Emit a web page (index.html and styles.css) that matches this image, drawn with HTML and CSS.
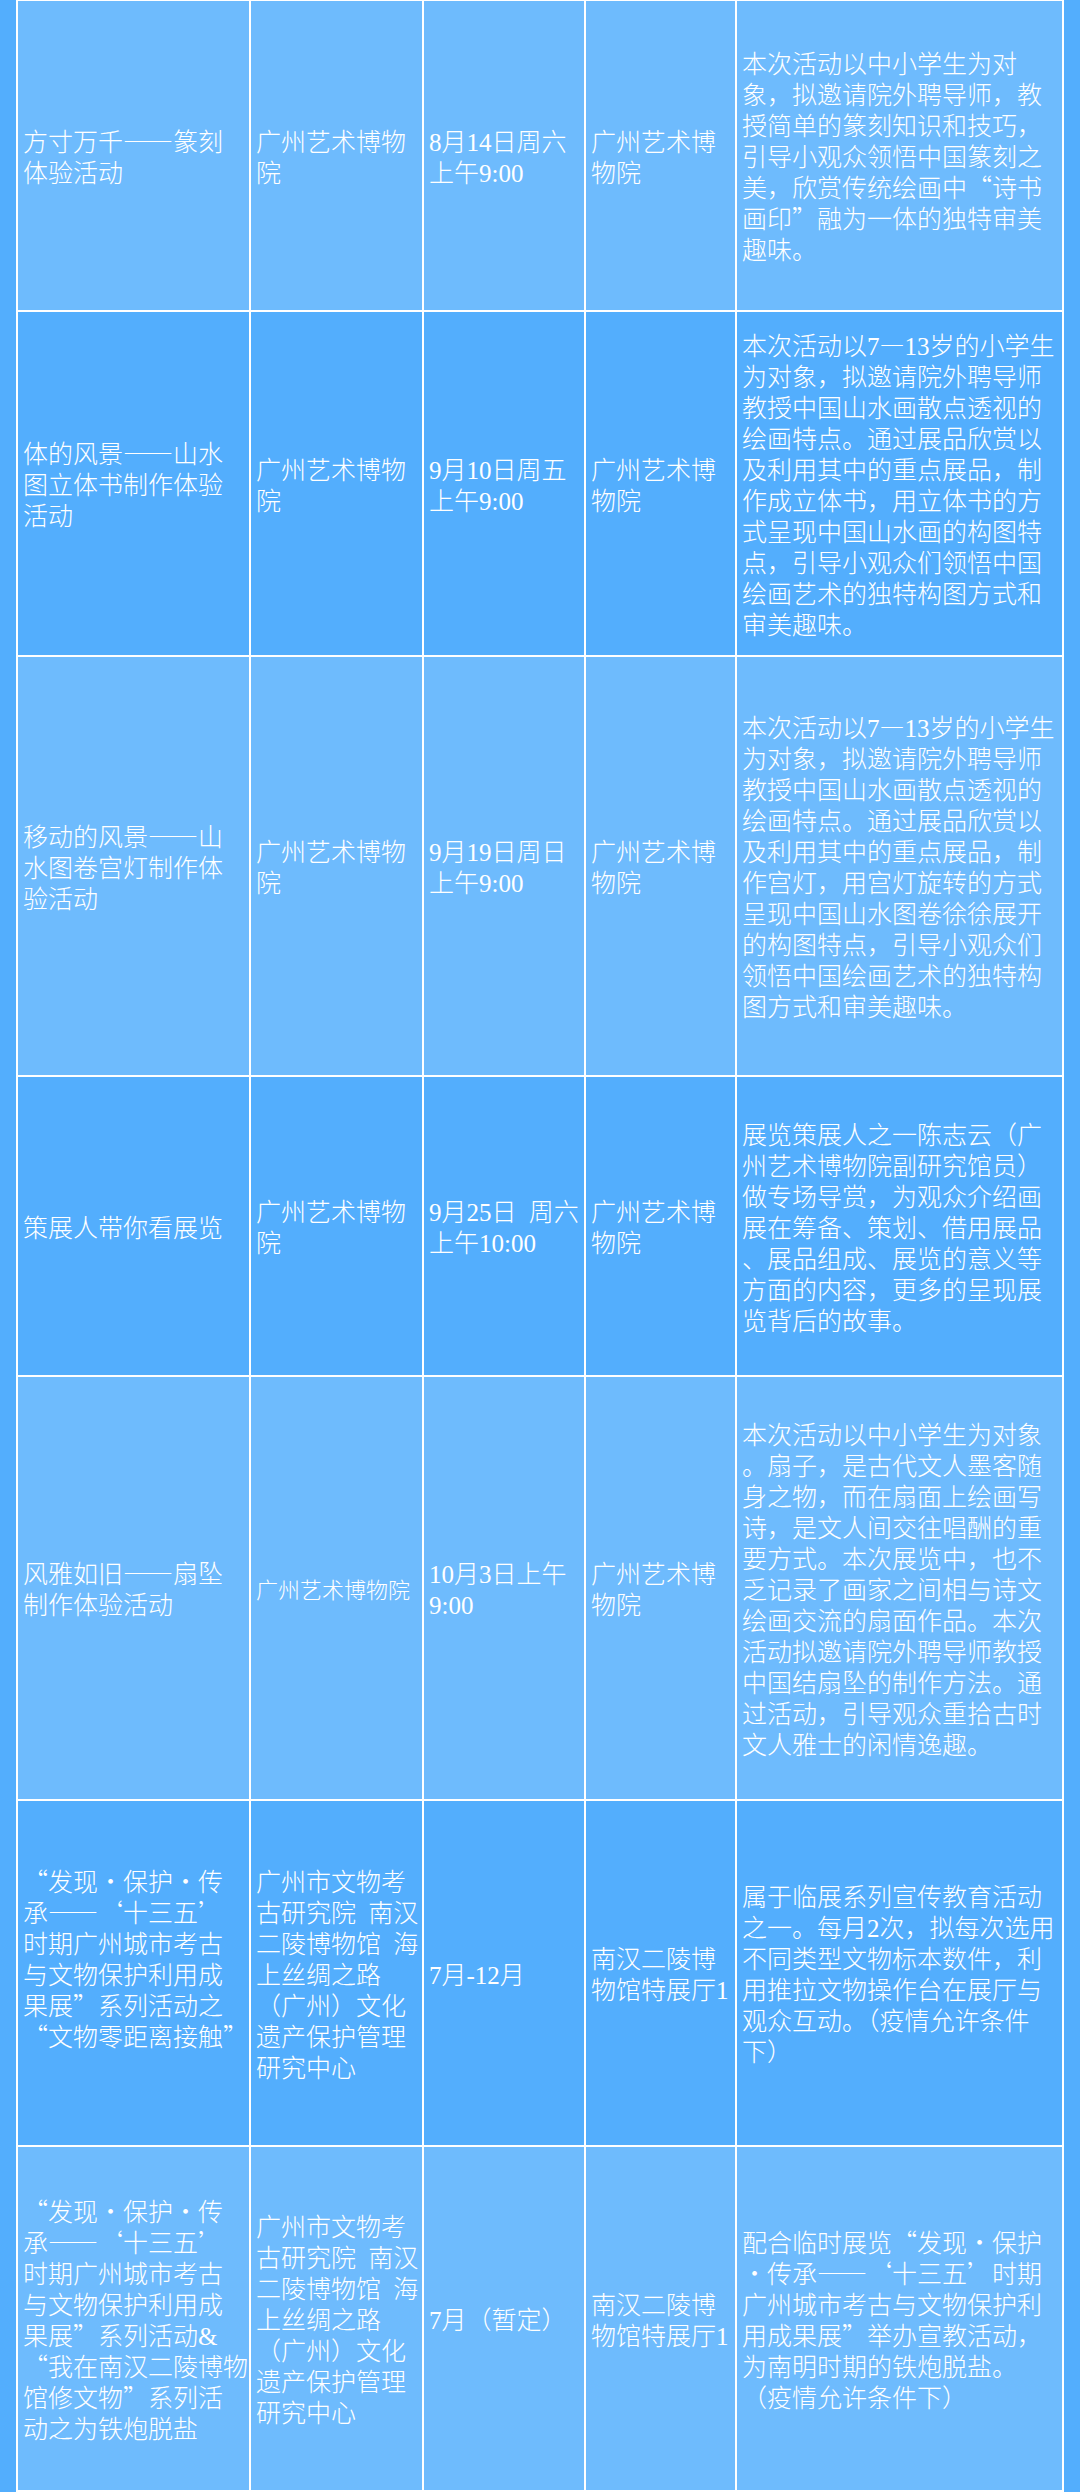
FILE: index.html
```html
<!DOCTYPE html>
<html lang="zh-CN">
<head>
<meta charset="utf-8">
<title>活动安排</title>
<link rel="stylesheet" href="styles.css">
</head>
<body>
<div class="sheet">
  <div class="grid">
    <div class="row light">
      <div class="cell"><p class="t">方寸万千——篆刻<br>体验活动</p></div>
      <div class="cell"><p class="t">广州艺术博物<br>院</p></div>
      <div class="cell"><p class="t"><span class="n">8</span>月<span class="n">14</span>日周六<br>上午<span class="n">9:00</span></p></div>
      <div class="cell"><p class="t">广州艺术博<br>物院</p></div>
      <div class="cell"><p class="t">本次活动以中小学生为对<br>象，拟邀请院外聘导师，教<br>授简单的篆刻知识和技巧，<br>引导小观众领悟中国篆刻之<br>美，欣赏传统绘画中“诗书<br>画印”融为一体的独特审美<br>趣味。</p></div>
    </div>
    <div class="row dark">
      <div class="cell"><p class="t">体的风景——山水<br>图立体书制作体验<br>活动</p></div>
      <div class="cell"><p class="t">广州艺术博物<br>院</p></div>
      <div class="cell"><p class="t"><span class="n">9</span>月<span class="n">10</span>日周五<br>上午<span class="n">9:00</span></p></div>
      <div class="cell"><p class="t">广州艺术博<br>物院</p></div>
      <div class="cell"><p class="t">本次活动以<span class="n">7</span>—<span class="n">13</span>岁的小学生<br>为对象，拟邀请院外聘导师<br>教授中国山水画散点透视的<br>绘画特点。通过展品欣赏以<br>及利用其中的重点展品，制<br>作成立体书，用立体书的方<br>式呈现中国山水画的构图特<br>点，引导小观众们领悟中国<br>绘画艺术的独特构图方式和<br>审美趣味。</p></div>
    </div>
    <div class="row light">
      <div class="cell"><p class="t">移动的风景——山<br>水图卷宫灯制作体<br>验活动</p></div>
      <div class="cell"><p class="t">广州艺术博物<br>院</p></div>
      <div class="cell"><p class="t"><span class="n">9</span>月<span class="n">19</span>日周日<br>上午<span class="n">9:00</span></p></div>
      <div class="cell"><p class="t">广州艺术博<br>物院</p></div>
      <div class="cell"><p class="t">本次活动以<span class="n">7</span>—<span class="n">13</span>岁的小学生<br>为对象，拟邀请院外聘导师<br>教授中国山水画散点透视的<br>绘画特点。通过展品欣赏以<br>及利用其中的重点展品，制<br>作宫灯，用宫灯旋转的方式<br>呈现中国山水图卷徐徐展开<br>的构图特点，引导小观众们<br>领悟中国绘画艺术的独特构<br>图方式和审美趣味。</p></div>
    </div>
    <div class="row dark">
      <div class="cell"><p class="t">策展人带你看展览</p></div>
      <div class="cell"><p class="t">广州艺术博物<br>院</p></div>
      <div class="cell"><p class="t"><span class="n">9</span>月<span class="n">25</span>日<span class="n"> </span>周六<br>上午<span class="n">10:00</span></p></div>
      <div class="cell"><p class="t">广州艺术博<br>物院</p></div>
      <div class="cell"><p class="t">展览策展人之一陈志云（广<br>州艺术博物院副研究馆员）<br>做专场导赏，为观众介绍画<br>展在筹备、策划、借用展品<br>、展品组成、展览的意义等<br>方面的内容，更多的呈现展<br>览背后的故事。</p></div>
    </div>
    <div class="row light">
      <div class="cell"><p class="t">风雅如旧——扇坠<br>制作体验活动</p></div>
      <div class="cell"><p class="t sm">广州艺术博物院</p></div>
      <div class="cell"><p class="t"><span class="n">10</span>月<span class="n">3</span>日上午<br><span class="n">9:00</span></p></div>
      <div class="cell"><p class="t">广州艺术博<br>物院</p></div>
      <div class="cell"><p class="t">本次活动以中小学生为对象<br>。扇子，是古代文人墨客随<br>身之物，而在扇面上绘画写<br>诗，是文人间交往唱酬的重<br>要方式。本次展览中，也不<br>乏记录了画家之间相与诗文<br>绘画交流的扇面作品。本次<br>活动拟邀请院外聘导师教授<br>中国结扇坠的制作方法。通<br>过活动，引导观众重拾古时<br>文人雅士的闲情逸趣。</p></div>
    </div>
    <div class="row dark">
      <div class="cell lift"><p class="t">“发现·保护·传<br>承——‘十三五’<br>时期广州城市考古<br>与文物保护利用成<br>果展”系列活动之<br>“文物零距离接触”</p></div>
      <div class="cell"><p class="t">广州市文物考<br>古研究院<span class="n"> </span>南汉<br>二陵博物馆<span class="n"> </span>海<br>上丝绸之路<br>（广州）文化<br>遗产保护管理<br>研究中心</p></div>
      <div class="cell"><p class="t"><span class="n">7</span>月<span class="n">-12</span>月</p></div>
      <div class="cell"><p class="t">南汉二陵博<br>物馆特展厅<span class="n">1</span></p></div>
      <div class="cell"><p class="t">属于临展系列宣传教育活动<br>之一。每月<span class="n">2</span>次，拟每次选用<br>不同类型文物标本数件，利<br>用推拉文物操作台在展厅与<br>观众互动。（疫情允许条件<br>下）</p></div>
    </div>
    <div class="row light">
      <div class="cell"><p class="t">“发现·保护·传<br>承——‘十三五’<br>时期广州城市考古<br>与文物保护利用成<br>果展”系列活动<span class="n">&amp;</span><br>“我在南汉二陵博物<br>馆修文物”系列活<br>动之为铁炮脱盐</p></div>
      <div class="cell"><p class="t">广州市文物考<br>古研究院<span class="n"> </span>南汉<br>二陵博物馆<span class="n"> </span>海<br>上丝绸之路<br>（广州）文化<br>遗产保护管理<br>研究中心</p></div>
      <div class="cell"><p class="t"><span class="n">7</span>月（暂定）</p></div>
      <div class="cell"><p class="t">南汉二陵博<br>物馆特展厅<span class="n">1</span></p></div>
      <div class="cell"><p class="t">配合临时展览“发现·保护<br>·传承——‘十三五’时期<br>广州城市考古与文物保护利<br>用成果展”举办宣教活动，<br>为南明时期的铁炮脱盐。<br>（疫情允许条件下）</p></div>
    </div>
  </div>
</div>
</body>
</html>
```

FILE: styles.css
```css
html, body {
  margin: 0;
  padding: 0;
}

body {
  background: #53aefd;
  width: 1080px;
  height: 2492px;
  overflow: hidden;
}

.sheet {
  padding: 0 16px;
}

.grid {
  display: grid;
  grid-template-columns: 231px 171px 160px 149px 325px;
  grid-template-rows: 309px 343px 418px 298px 422px 344px 343px;
  gap: 2px;
  padding: 1px 2px 2px 2px;
  background: #ffffff;
}

.row {
  display: contents;
}

.cell {
  display: flex;
  align-items: center;
  padding: 0 4px 0 5px;
  min-width: 0;
}

.t {
  margin: 0;
  color: #ffffff;
  font-family: "Noto Sans CJK SC", sans-serif;
  font-weight: 300;
  font-size: 25px;
  line-height: 31px;
  white-space: nowrap;
  font-feature-settings: "fwid" 1;
}

.t.sm {
  font-size: 22px;
}

.row.light .cell {
  background: #6ebbfd;
}

.row.dark .cell {
  background: #53aefd;
}

.cell.lift {
  padding-bottom: 31px;
}

.n {
  font-family: "Liberation Serif", serif;
  font-weight: 400;
  line-height: 1;
  word-spacing: 6px;
}
```
